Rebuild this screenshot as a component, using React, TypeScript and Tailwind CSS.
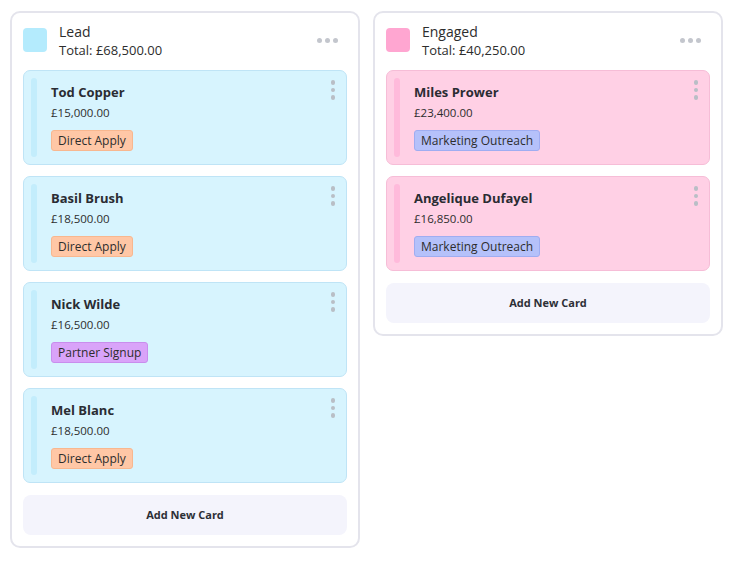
import type { ReactNode } from "react";

type Tone = "orange" | "purple" | "blue";

type Deal = {
  id: string;
  name: string;
  amount: string;
  source: string;
  tone: Tone;
};

type Stage = {
  id: string;
  title: string;
  total: string;
  swatch: string;
  card: string;
  bar: string;
  deals: Deal[];
};

const badgeClass: Record<Tone, string> = {
  orange: "bg-[#ffc7a6] border-[#f8b78f]",
  purple: "bg-[#d9a3f9] border-[#c98ded]",
  blue: "bg-[#b5c1fa] border-[#9fadf1]",
};

const stages: Stage[] = [
  {
    id: "lead",
    title: "Lead",
    total: "Total: £68,500.00",
    swatch: "bg-[#b4ebfd]",
    card: "bg-[#d7f4fe] border-[#bfe4f6]",
    bar: "bg-[#c3edfc]",
    deals: [
      { id: "1", name: "Tod Copper", amount: "£15,000.00", source: "Direct Apply", tone: "orange" },
      { id: "2", name: "Basil Brush", amount: "£18,500.00", source: "Direct Apply", tone: "orange" },
      { id: "3", name: "Nick Wilde", amount: "£16,500.00", source: "Partner Signup", tone: "purple" },
      { id: "4", name: "Mel Blanc", amount: "£18,500.00", source: "Direct Apply", tone: "orange" },
    ],
  },
  {
    id: "engaged",
    title: "Engaged",
    total: "Total: £40,250.00",
    swatch: "bg-[#ffa6d1]",
    card: "bg-[#ffd0e5] border-[#f6bdd7]",
    bar: "bg-[#ffbadb]",
    deals: [
      { id: "5", name: "Miles Prower", amount: "£23,400.00", source: "Marketing Outreach", tone: "blue" },
      { id: "6", name: "Angelique Dufayel", amount: "£16,850.00", source: "Marketing Outreach", tone: "blue" },
    ],
  },
];

function Dot() {
  return <span className="block h-[5px] w-[5px] rounded-full bg-[#c3c6cd]" />;
}

function DealCard({ deal, stage }: { deal: Deal; stage: Stage }) {
  return (
    <article className={`relative flex h-[95px] rounded-[7px] border py-[7px] pl-[7px] ${stage.card}`}>
      <div className={`w-[6px] self-stretch rounded-full ${stage.bar}`} />
      <div className="ml-[14px] flex flex-col items-start pt-[5px]">
        <div className="text-[13px] leading-[18px] font-bold text-[#2a2c33]">{deal.name}</div>
        <div className="mt-[4px] text-[11.5px] leading-[16px] text-[#2d2d2d]">{deal.amount}</div>
        <span
          className={`mt-[9px] flex h-[21px] items-center rounded-[3px] border px-[6px] text-[12px] text-[#2d2d2d] ${badgeClass[deal.tone]}`}
        >
          {deal.source}
        </span>
      </div>
      <div className="absolute top-[9px] right-[11px] flex flex-col gap-[3px]">
        <span className="block h-[4.5px] w-[4.5px] rounded-full bg-[#b9bec6]" />
        <span className="block h-[4.5px] w-[4.5px] rounded-full bg-[#b9bec6]" />
        <span className="block h-[4.5px] w-[4.5px] rounded-full bg-[#b9bec6]" />
      </div>
    </article>
  );
}

function Column({ stage, children }: { stage: Stage; children?: ReactNode }) {
  return (
    <section className="flex w-[350px] flex-col rounded-[10px] border-2 border-[#e4e4ec] bg-white px-[11px] pt-[15px] pb-[11px]">
      <header className="flex h-[42px] items-start">
        <div className={`h-[24px] w-[24px] shrink-0 rounded-[4px] ${stage.swatch}`} />
        <div className="-mt-[6px] ml-[12px] flex-1 text-[#2d2d2d]">
          <div className="text-[14px] leading-[19px]">{stage.title}</div>
          <div className="text-[13px] leading-[18px]">{stage.total}</div>
        </div>
        <div className="mt-[10px] mr-[9px] flex gap-[3px]">
          <Dot />
          <Dot />
          <Dot />
        </div>
      </header>
      <div className="flex flex-col gap-[11px]">
        {stage.deals.map((deal) => (
          <DealCard key={deal.id} deal={deal} stage={stage} />
        ))}
      </div>
      {children}
      <button className="mt-[12px] flex h-[40px] items-center justify-center rounded-[8px] bg-[#f4f4fc] text-[11px] font-bold text-[#2d2f36]">
        Add New Card
      </button>
    </section>
  );
}

export default function App() {
  return (
    <div
      className="flex min-h-[563px] items-start gap-[13px] bg-white pt-[11px] pl-[10px]"
      style={{ fontFamily: '"Open Sans", "Noto Sans", sans-serif' }}
    >
      {stages.map((stage) => (
        <Column key={stage.id} stage={stage} />
      ))}
    </div>
  );
}
